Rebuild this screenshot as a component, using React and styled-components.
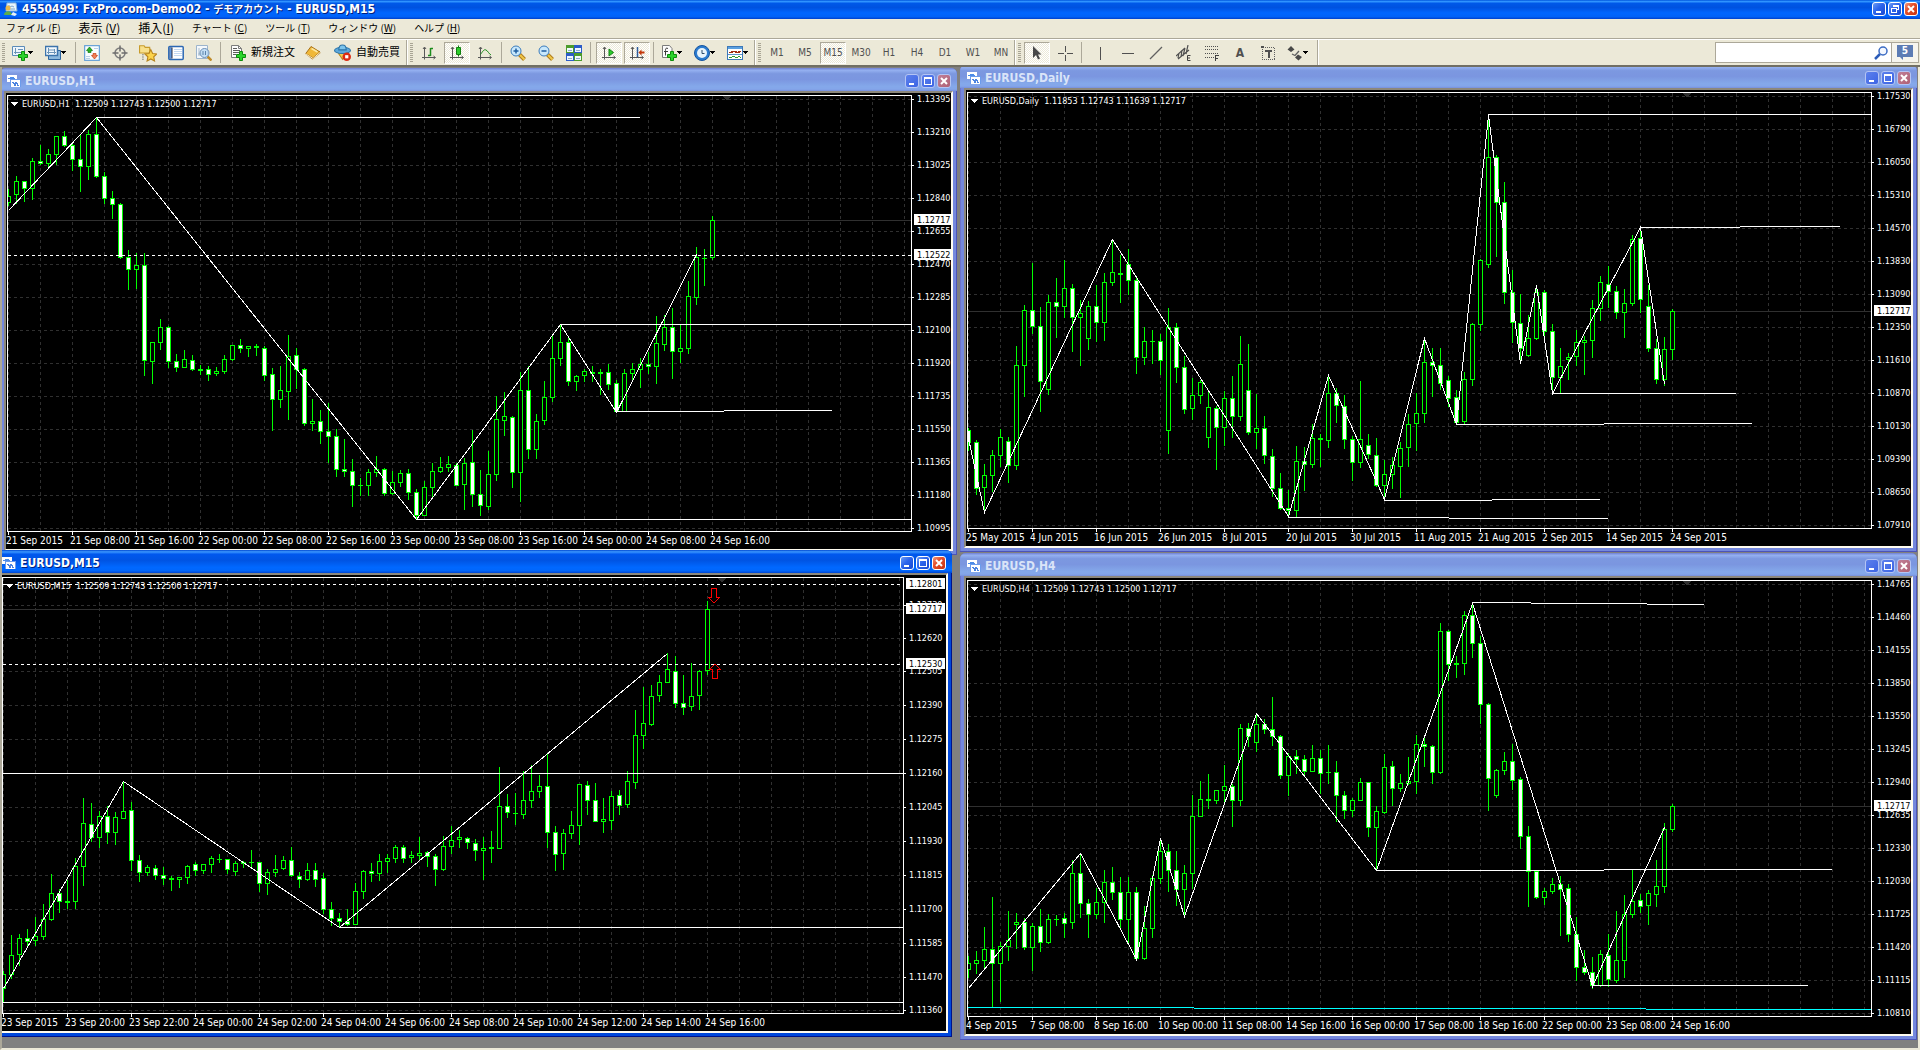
import React from 'react';
import styled, { createGlobalStyle, css } from 'styled-components';

const GlobalStyle = createGlobalStyle`
  * {
    box-sizing: border-box;
  }

  body {
    margin: 0;
    background: #ece9d8;
    font-family: 'DejaVu Sans Condensed', 'Noto Sans', 'Noto Sans CJK JP', sans-serif;
  }

  button {
    margin: 0;
    padding: 0;
    border: 0;
    background: none;
    color: inherit;
    font: inherit;
  }
`;

/* ---------- chart data ---------- */

// One candle per entry: direction (u = hollow, d = filled), high, body top,
// body bottom, low. Heights are in ticks, three ticks to a pixel.
const TICKS = 3;
const STEP = 8;

const H1 = `u 297 319 337 345,u 258 274 314 340,d 274 274 295 335,u 204 214 295 329,d 165 214 220 224,
u 178 193 220 231,u 138 139 193 224,d 124 139 166 170,d 162 166 208 242,d 135 208 229 305,
u 120 133 230 269,d 82 133 259 261,d 247 259 325 341,d 304 325 343 386,d 339 343 502 506,
d 480 502 538 597,u 489 526 538 594,d 489 526 811 857,u 757 757 814 881,u 687 712 757 779,
d 709 712 814 833,d 793 814 832 845,u 780 808 832 833,d 795 811 838 842,d 826 838 841 854,
d 829 838 853 872,u 832 844 850 857,u 796 808 844 851,u 765 766 808 811,d 747 766 775 788,
u 768 769 775 800,d 762 769 772 797,d 768 775 856 872,d 835 853 928 1022,u 829 901 928 953,
u 735 799 904 987,d 774 796 838 896,d 835 838 1000 1007,u 927 994 1000 1022,d 960 994 1024 1059,
d 939 1024 1039 1118,d 1017 1039 1138 1158,d 1047 1138 1143 1158,d 1107 1144 1186 1248,d 1164 1186 1186 1217,
u 1137 1147 1186 1217,u 1098 1138 1147 1158,d 1135 1138 1211 1215,u 1144 1177 1211 1212,u 1140 1150 1177 1189,
d 1137 1150 1207 1229,d 1197 1207 1276 1289,u 1174 1192 1276 1277,u 1119 1144 1192 1224,u 1101 1132 1144 1147,
u 1098 1123 1132 1145,d 1120 1126 1186 1187,u 1105 1120 1184 1259,d 1020 1117 1213 1250,d 1140 1213 1246 1277,
u 1083 1153 1249 1259,u 918 988 1154 1172,u 906 979 991 1037,d 979 982 1147 1193,u 846 901 1147 1235,
d 829 901 1078 1106,u 972 994 1078 1106,u 873 922 991 1004,u 732 805 922 935,u 703 757 805 825,
d 742 757 874 887,u 855 858 874 902,u 838 844 856 875,d 829 847 850 875,d 838 847 850 912,
d 822 847 883 899,d 870 880 965 968,u 837 850 964 965,u 820 838 850 868,u 804 823 838 893,
d 787 823 829 849,u 678 760 829 881,u 675 712 764 782,d 654 712 784 866,u 703 775 784 818,
u 573 619 775 791,u 471 502 622 644,d 477 505 505 585,u 378 391 502 509`;

const DAILY = `d 1014 1021 1058 1082,d 1050 1057 1195 1212,u 1122 1156 1192 1269,u 1080 1096 1157 1205,u 1017 1042 1097 1128,
d 1041 1054 1127 1178,u 768 826 1127 1139,u 645 661 826 920,d 519 661 709 731,d 651 709 874 963,
u 615 637 899 914,d 564 637 649 743,u 510 595 650 681,d 582 595 682 785,u 630 670 682 827,
u 633 649 745 777,d 585 649 697 755,u 549 577 697 752,u 447 547 577 587,d 495 550 553 638,
d 477 523 571 612,d 562 571 802 849,u 711 754 802 822,d 720 754 754 821,d 732 754 811 854,
u 654 712 1021 1091,d 699 712 832 878,d 798 832 958 971,u 865 916 955 987,u 870 877 916 941,
u 900 952 1042 1071,d 949 955 1012 1139,u 903 925 1012 1065,d 858 925 979 1041,u 738 823 979 990,
d 762 901 1027 1034,u 912 1015 1027 1074,d 979 1015 1096 1121,d 1077 1099 1195 1220,d 1149 1195 1255 1258,
d 1200 1255 1261 1280,u 1068 1114 1261 1280,d 1071 1114 1123 1202,u 1002 1045 1123 1133,d 1033 1045 1048 1128,
u 855 910 1052 1071,d 894 910 946 998,d 915 949 1048 1074,d 1039 1048 1117 1172,u 873 1048 1117 1133,
d 1032 1066 1093 1106,d 1044 1096 1186 1190,u 1110 1153 1186 1229,u 1102 1126 1153 1196,u 1056 1075 1129 1221,
u 972 1003 1073 1128,u 909 970 1000 1082,u 744 817 970 996,d 774 817 826 920,d 774 826 880 898,
d 858 871 925 950,d 900 922 997 1003,u 846 868 995 1003,u 699 703 868 885,u 507 511 703 722,
u 75 202 523 533,d 195 202 337 498,d 276 337 607 639,d 540 607 697 758,d 612 700 775 820,
u 675 745 797 800,u 585 607 745 749,d 600 607 724 750,d 702 724 862 910,u 774 829 862 909,
u 789 802 808 867,u 720 757 799 825,u 738 751 757 852,u 630 655 751 801,u 558 577 655 690,
d 528 583 604 651,d 588 604 667 684,u 597 640 667 743,u 435 448 640 647,d 414 445 628 668,
d 585 649 775 785,d 748 775 868 879,u 741 778 868 887,u 657 664 778 809`;

const M15 = `u 1264 1273 1316 1355,u 1156 1216 1273 1284,u 1152 1165 1213 1245,d 1137 1165 1174 1193,u 1101 1159 1171 1187,
u 1062 1108 1160 1167,u 972 1030 1109 1112,d 1018 1030 1054 1088,d 990 1054 1057 1074,u 924 949 1054 1076,
u 744 820 949 1005,d 760 823 862 875,u 784 799 862 891,d 769 799 848 879,u 786 802 848 884,
u 695 784 805 806,d 756 781 931 960,d 915 931 967 995,u 945 952 967 977,d 945 955 976 987,
d 951 976 985 1004,d 978 985 988 1022,u 982 982 988 1013,u 946 949 982 1001,d 936 943 961 975,
u 942 943 961 971,u 919 925 943 968,d 912 928 928 936,d 927 928 958 971,u 933 940 964 977,
d 934 937 940 953,d 900 937 937 948,d 936 937 1000 1025,u 957 967 1000 1034,u 915 958 967 980,
u 919 931 955 959,d 892 931 976 980,d 967 979 988 1013,u 939 961 988 990,d 939 961 988 1010,
d 969 985 1078 1091,d 1056 1078 1105 1127,d 1090 1105 1114 1132,d 1077 1114 1123 1126,u 999 1024 1123 1124,
u 961 964 1024 1044,d 939 964 969 993,u 912 934 970 990,u 913 925 934 968,u 885 892 925 936,
d 885 892 925 938,u 903 916 922 937,u 861 910 916 930,d 903 907 919 948,d 912 919 958 1007,
u 858 889 958 962,u 828 871 889 911,u 840 862 868 893,d 861 865 877 896,d 868 880 901 930,
u 862 895 901 987,d 843 892 895 938,u 651 769 895 896,d 732 769 787 801,d 730 790 790 822,
u 663 751 793 804,u 645 724 751 771,u 676 709 724 741,d 610 709 848 893,d 829 847 913 962,
u 837 850 910 957,u 783 826 850 866,u 702 703 827 882,d 693 706 751 792,d 699 751 814 815,
u 744 808 814 846,u 723 739 811 837,d 720 736 766 792,u 663 694 764 771,u 481 556 698 716,
u 411 520 556 594,u 405 439 523 527,u 375 397 436 453,u 309 358 397 398,d 318 364 460 473,
d 376 460 472 494,u 339 439 469 482,u 361 364 436 479,u 153 178 361 372`;

const H4 = `u 1218 1240 1258 1281,u 1203 1231 1241 1270,u 1131 1198 1232 1258,d 1041 1198 1241 1368,u 1176 1189 1241 1353,
u 1083 1171 1190 1230,u 1089 1117 1123 1196,d 1105 1117 1192 1199,u 1119 1129 1193 1262,d 1077 1129 1178 1205,
u 1092 1108 1178 1179,d 1095 1108 1108 1125,d 1089 1105 1120 1161,u 930 970 1118 1136,d 912 970 1060 1103,
d 1047 1060 1093 1163,u 1014 1057 1094 1106,u 960 997 1057 1116,d 951 997 1027 1047,d 981 1027 1108 1133,
u 981 1027 1108 1178,d 1011 1027 1225 1229,u 1068 1135 1226 1229,u 975 985 1135 1163,u 864 904 986 999,
d 882 904 961 1025,d 903 961 1018 1065,u 945 970 1018 1098,u 735 799 970 1014,u 693 748 799 800,
d 672 748 751 774,u 720 721 751 761,u 645 709 721 755,d 702 709 751 830,u 522 535 751 765,
d 519 535 559 590,u 490 523 578 605,d 507 523 538 551,d 441 538 559 585,d 556 559 677 686,
u 609 619 677 735,d 600 619 628 669,d 616 628 664 674,u 585 625 664 665,d 600 625 670 731,
d 585 667 667 701,d 633 667 736 815,d 724 736 781 806,u 744 751 781 800,u 684 697 751 752,
d 697 697 832 860,u 768 784 832 960,u 612 652 788 789,d 633 649 715 765,u 672 700 715 725,
u 621 694 700 704,u 555 583 695 731,d 564 583 589 648,d 585 589 667 701,u 219 244 667 671,
d 240 244 343 390,d 318 341 344 383,u 183 196 341 372,d 159 196 280 323,d 258 280 463 519,
d 460 463 685 782,u 657 661 737 743,u 606 634 661 674,d 582 634 691 719,d 681 688 859 896,
d 828 859 964 1068,d 963 964 1042 1046,u 1014 1024 1042 1062,u 984 1003 1024 1029,d 979 1003 1018 1155,
d 1002 1015 1153 1175,d 1101 1153 1252 1290,d 1200 1252 1267 1274,d 1221 1267 1306 1316,u 1200 1213 1305 1310,
d 1152 1216 1288 1310,u 1083 1231 1291 1298,u 1035 1093 1231 1283,u 960 1054 1093 1101,d 1032 1051 1069 1086,
u 1020 1030 1066 1122,u 930 1009 1033 1068,u 819 838 1009 1028,u 762 769 838 843`;

const evenRows = Array.from({ length: 14 }, (_, i) => 6 + i * 33);

// levels: [from, to, y, color]; `to` of 0 runs to the edge of the plot.
const CHARTS = [
  {
    title: 'EURUSD,H1',
    quote: '1.12509 1.12743 1.12500 1.12717',
    x: -2,
    y: 1,
    origin: [6, 3],
    right: 905,
    candles: H1,
    rows: evenRows,
    prices: ['1.13395', '1.13210', '1.13025', '1.12840', '1.12655', '1.12470', '1.12285', '1.12100', '1.11920', '1.11735', '1.11550', '1.11365', '1.11180', '1.10995'],
    times: ['21 Sep 2015', '21 Sep 08:00', '21 Sep 16:00', '22 Sep 00:00', '22 Sep 08:00', '22 Sep 16:00', '23 Sep 00:00', '23 Sep 08:00', '23 Sep 16:00', '24 Sep 00:00', '24 Sep 08:00', '24 Sep 16:00'],
    zigzag: [[0, 361], [11, 82], [51, 1288], [69, 704], [76, 968], [86, 494]],
    levels: [[289, 1920, 82], [1681, 0, 703], [1249, 0, 1288], [1849, 2172, 964], [2172, 2496, 961]],
    current: 391,
    dashed: [496],
    tags: [[391, '1.12717'], [496, '1.12522']],
  },
  {
    title: 'EURUSD,Daily',
    quote: '1.11853 1.12743 1.11639 1.12717',
    x: 958,
    y: -2,
    origin: [6, 0],
    right: 905,
    candles: DAILY,
    rows: evenRows,
    prices: ['1.17530', '1.16790', '1.16050', '1.15310', '1.14570', '1.13830', '1.13090', '1.12350', '1.11610', '1.10870', '1.10130', '1.09390', '1.08650', '1.07910'],
    times: ['25 May 2015', '4 Jun 2015', '16 Jun 2015', '26 Jun 2015', '8 Jul 2015', '20 Jul 2015', '30 Jul 2015', '11 Aug 2015', '21 Aug 2015', '2 Sep 2015', '14 Sep 2015', '24 Sep 2015'],
    zigzag: [[0, 1046], [2, 1268], [18, 447], [40, 1280], [45, 855], [52, 1229], [57, 744], [61, 1002], [65, 75], [69, 820], [71, 585], [73, 910], [84, 412], [87, 884]],
    levels: [[1585, 0, 73], [2041, 2340, 412], [2340, 2640, 409], [1777, 2328, 910], [1489, 1932, 1003], [1932, 2376, 1000], [1273, 1596, 1231], [1596, 1920, 1228], [985, 1467, 1282], [1467, 1944, 1285]],
    current: 664,
    dashed: [],
    tags: [[664, '1.12717']],
  },
  {
    title: 'EURUSD,H4',
    quote: '1.12509 1.12743 1.12500 1.12717',
    x: 958,
    y: 486,
    origin: [6, 28],
    right: 905,
    candles: H4,
    rows: evenRows,
    prices: ['1.14765', '1.14460', '1.14155', '1.13850', '1.13550', '1.13245', '1.12940', '1.12635', '1.12330', '1.12030', '1.11725', '1.11420', '1.11115', '1.10810'],
    times: ['4 Sep 2015', '7 Sep 08:00', '8 Sep 16:00', '10 Sep 00:00', '11 Sep 08:00', '14 Sep 16:00', '16 Sep 00:00', '17 Sep 08:00', '18 Sep 16:00', '22 Sep 00:00', '23 Sep 08:00', '24 Sep 16:00'],
    zigzag: [[0, 1315], [14, 911], [21, 1228], [24, 864], [27, 1098], [36, 489], [51, 960], [63, 159], [78, 1309], [87, 833]],
    levels: [[1537, 1713, 157], [1713, 2061, 160], [2061, 2232, 163], [1249, 1932, 961], [1932, 2616, 958], [1897, 2544, 1306], [24, 702, 1372, '#00ffff'], [702, 2058, 1375, '#00ffff'], [2058, 0, 1378, '#00ffff']],
    current: 769,
    dashed: [],
    tags: [[769, '1.12717']],
  },
  {
    title: 'EURUSD,M15',
    quote: '1.12509 1.12743 1.12500 1.12717',
    active: true,
    x: -7,
    y: 483,
    origin: [1, 25],
    right: 902,
    candles: M15,
    rows: [30, 63, 96, 130, 164, 198, 232, 266, 300, 334, 368, 402, 435],
    prices: ['1.12730', '1.12620', '1.12505', '1.12390', '1.12275', '1.12160', '1.12045', '1.11930', '1.11815', '1.11700', '1.11585', '1.11470', '1.11360'],
    times: ['23 Sep 2015', '23 Sep 20:00', '23 Sep 22:00', '24 Sep 00:00', '24 Sep 02:00', '24 Sep 04:00', '24 Sep 06:00', '24 Sep 08:00', '24 Sep 10:00', '24 Sep 12:00', '24 Sep 14:00', '24 Sep 16:00'],
    zigzag: [[0, 1316], [15, 695], [42, 1132], [83, 311]],
    levels: [[6, 0, 670], [6, 0, 1357], [1018, 0, 1132]],
    current: 178,
    dashed: [103, 343],
    tags: [[103, '1.12801'], [178, '1.12717'], [343, '1.12530']],
    arrows: true,
  },
];

/* ---------- chart ---------- */

const ChartSvg = styled.svg`
  display: block;
  background: #000;
  shape-rendering: crispEdges;
`;

const ChartText = styled.text`
  fill: ${(props) => (props.$dark ? '#000' : '#fff')};
  font-size: 9px;
  white-space: pre;
`;

const TimeText = styled(ChartText)`
  font-size: 10px;
`;

const CHART_W = 945;
const CHART_H = 456;
const TOP = 2;
const BOTTOM = 438;

const Candle = ({ x, up, high, top, bottom, low }) => {
  const height = bottom - top + 1;
  return (
    <g>
      <rect x={x} y={high} width="1" height={low - high + 1} fill="#00ff00" />
      <rect x={x - 2} y={top} width="5" height={height} fill="#00ff00" />
      {height > 2 && (
        <rect x={x - 1} y={top + 1} width="3" height={height - 2} fill={up ? '#000' : '#fff'} />
      )}
    </g>
  );
};

const Chart = ({ chart }) => {
  const { origin, right } = chart;
  const px = (v) => Math.floor(v / TICKS) - origin[0];
  const py = (v) => Math.floor(v / TICKS) - origin[1];

  const columns = [];
  for (let x = 2; x < right; x += 32) columns.push(x);

  const candles = chart.candles.split(',').map((row, i) => {
    const [dir, high, top, bottom, low] = row.trim().split(' ');
    return { x: 2 + i * STEP, up: dir === 'u', high: py(high), top: py(top), bottom: py(bottom), low: py(low) };
  });

  return (
    <ChartSvg width={CHART_W} height={CHART_H} viewBox={`0 0 ${CHART_W} ${CHART_H}`} role="img" aria-label={chart.title}>
      <g stroke="#303030" strokeDasharray="3 3">
        {columns.map((x) => (
          <path key={x} d={`M${x + 0.5} ${TOP + 1}V${BOTTOM}`} />
        ))}
        {chart.rows.map((y) => (
          <path key={y} d={`M2 ${y + 0.5}H${right}`} />
        ))}
      </g>
      <rect x="2" y={py(chart.current)} width={right - 2} height="1" fill="#303030" />
      <path d="M716 3h9l-4 4h-1z" fill="#303030" />

      {candles.map((c) => (
        <Candle key={c.x} {...c} />
      ))}

      {chart.levels.map(([from, to, y, color]) => (
        <rect
          key={`${from}-${y}`}
          x={px(from)}
          y={py(y)}
          width={(to ? px(to) : right) - px(from)}
          height="1"
          fill={color || '#fff'}
        />
      ))}
      {chart.dashed.map((y) => (
        <path key={y} d={`M2 ${py(y) + 0.5}H${right}`} stroke="#fff" strokeDasharray="3 3" />
      ))}
      <polyline
        points={chart.zigzag.map(([i, y]) => `${2.5 + i * STEP},${py(y) + 0.5}`).join(' ')}
        fill="none"
        stroke="#fff"
      />
      {chart.arrows && (
        <g fill="none" stroke="#ff0000">
          <path d="M710.5 13.5h5v9h3l-5.500 5.500l-5.500-5.500h3z" />
          <path d="M711.500 103.500h5v-9h3l-5.500-5.500l-5.500 5.500h3z" />
        </g>
      )}

      <rect x="0" y="0" width="1" height={CHART_H} fill="#000" />
      <path d={`M1.500 ${TOP + 0.5}H${right + 0.5}V${BOTTOM + 0.5}H1.500Z`} fill="none" stroke="#fff" />

      <path d="M5 9h7l-3 4h-1z" fill="#fff" />
      <ChartText x="16" y="14">{`${chart.title}  ${chart.quote}`}</ChartText>

      {chart.times.map((time, i) => (
        <g key={time}>
          <rect x={2 + i * 64} y={BOTTOM} width="1" height="4" fill="#fff" />
          <TimeText x={i * 64} y="451">{time}</TimeText>
        </g>
      ))}
      {chart.rows.map((y, i) => (
        <g key={y}>
          <rect x={right} y={y} width="3" height="1" fill="#fff" />
          <ChartText x={right + 6} y={y + 3}>{chart.prices[i]}</ChartText>
        </g>
      ))}
      {chart.tags.map(([y, label]) => (
        <g key={label}>
          <rect x={right + 3} y={py(y) - 6} width="39" height="11" fill="#fff" />
          <ChartText $dark x={right + 6} y={py(y) + 3}>{label}</ChartText>
        </g>
      ))}
    </ChartSvg>
  );
};

/* ---------- windows ---------- */

const CaptionButton = styled.button`
  display: flex;
  align-items: center;
  justify-content: center;
  width: 14px;
  height: 14px;
  border: 1px solid ${(props) => (props.$active ? '#fff' : '#b4c4f4')};
  border-radius: 3px;
  background: ${(props) => {
    if (props.$close) {
      return props.$active
        ? 'linear-gradient(135deg, #f0967c, #e4502c 40%, #c83010)'
        : 'linear-gradient(135deg, #c08098, #b06074)';
    }
    return props.$active
      ? 'linear-gradient(135deg, #6c9cf4, #2c64ec 45%, #1848d0)'
      : 'linear-gradient(135deg, #5c80ec, #3c64e4)';
  }};
`;

const Caption = styled.div`
  display: flex;
  gap: 2px;
`;

const CaptionButtons = ({ active, restore }) => (
  <Caption>
    <CaptionButton $active={active} aria-label="最小化">
      <svg width="12" height="12"><path d="M3 8h5v2H3z" fill="#fff" /></svg>
    </CaptionButton>
    <CaptionButton $active={active} aria-label={restore ? '元に戻す' : '最大化'}>
      <svg width="12" height="12" fill="none" stroke="#fff" shapeRendering="crispEdges">
        {restore ? (
          <path d="M4.500 4V2.500h5v4H8M4 3h6M2.500 5.500h5v4h-5zM2 5h6" />
        ) : (
          <path d="M2.500 3.500h7v6h-7zM2 2.500h8" />
        )}
      </svg>
    </CaptionButton>
    <CaptionButton $active={active} $close aria-label="閉じる">
      <svg width="12" height="12"><path d="M3 3l6 6M9 3l-6 6" stroke="#fff" strokeWidth="2" /></svg>
    </CaptionButton>
  </Caption>
);

const activeFrame = css`
  background: #0048dc;
  box-shadow: inset -1px -1px #00138c;
`;

const inactiveFrame = css`
  background: #7488dd;
  box-shadow: inset -1px -1px #4c54b8, inset 1px 0 #6c74cc;
`;

const Window = styled.section`
  position: absolute;
  left: ${(props) => props.$x}px;
  top: ${(props) => props.$y}px;
  padding: 0 4px 4px;
  border-radius: 6px 6px 0 0;
  ${(props) => (props.$active ? activeFrame : inactiveFrame)}
`;

const WindowTitle = styled.header`
  display: flex;
  align-items: center;
  gap: 4px;
  height: 23px;
  margin: 0 -4px;
  padding: 2px 6px 0 7px;
  border-radius: 6px 6px 0 0;
  background: ${(props) =>
    props.$active
      ? 'linear-gradient(#0048d0, #3c98ff 8%, #0058ee 18%, #0054e3 45%, #0068ff 75%, #0066fc 90%, #0044d0)'
      : 'linear-gradient(#7080d4, #94b0f0 10%, #7c98e0 25%, #7b96e0 50%, #84a8ea 80%, #84a6ea 92%, #7890dc)'};
`;

const WindowName = styled.h2`
  flex: 1;
  margin: 0;
  color: ${(props) => (props.$active ? '#fff' : '#dae4f8')};
  font-size: 12px;
  font-weight: bold;
  line-height: 16px;
  text-shadow: ${(props) => (props.$active ? '1px 1px #00207c' : 'none')};
`;

const Client = styled.div`
  border: 2px solid;
  border-color: #8c887c #fffcf0 #fffcf0 #8c887c;
`;

const ChartWindowIcon = () => (
  <svg width="14" height="14" viewBox="0 0 14 14" shapeRendering="crispEdges">
    <path d="M0 1h10v7H0z" fill="#fff" />
    <path d="M1 4.500h2v-1h1v1h1v-1h1v1h2" fill="none" stroke="#4c8ce8" />
    <path d="M3 5h11v8H3z" fill="#6c9cec" />
    <path d="M4 6h9v7H4z" fill="#fff" />
    <path d="M5 8.500h1v1h1v2h1v-3h1v1h1v2h1v-1" fill="none" stroke="#4c84e0" />
  </svg>
);

const ChartWindow = ({ chart }) => (
  <Window $x={chart.x} $y={chart.y} $active={chart.active}>
    <WindowTitle $active={chart.active}>
      <ChartWindowIcon />
      <WindowName $active={chart.active}>{chart.title}</WindowName>
      <CaptionButtons active={chart.active} />
    </WindowTitle>
    <Client>
      <Chart chart={chart} />
    </Client>
  </Window>
);

/* ---------- toolbar icons ---------- */

const Icon = ({ children, size = 16, crisp }) => (
  <svg width={size} height={size} viewBox="0 0 16 16" fill="none" shapeRendering={crisp ? 'crispEdges' : 'auto'}>
    {children}
  </svg>
);

const GreenPlus = () => (
  <path d="M9.500 6.500h3v3h3v3h-3v3h-3v-3h-3v-3h3z" fill="#2cd42c" stroke="#0c8c0c" />
);

const Lens = ({ x = 6, y = 6, children }) => (
  <>
    <path d={`M${x + 3.5} ${y + 3.5}l5 5`} stroke="#b07c1c" strokeWidth="4" />
    <path d={`M${x + 4} ${y + 4}l4.500 4.500`} stroke="#f0c848" strokeWidth="2" />
    <circle cx={x} cy={y} r="5" fill="#c8e8fc" stroke="#3c7cbc" />
    {children}
  </>
);

const Axes = () => (
  <path d="M3.500 2.500v12M1 12.500h13M2 4l1.500-2L5 4M12.500 11l2 1.500l-2 1.500" stroke="#585858" />
);

const icons = {
  newChart: (
    <Icon>
      <path d="M.5 1.500h12v9H.5z" fill="#eef6fc" stroke="#5c8cb8" />
      <path d="M3.500 3v6M2 7.500h9M6 4.500h5" stroke="#6c94b8" />
      <GreenPlus />
    </Icon>
  ),
  profiles: (
    <Icon>
      <path d="M3.500 5.500h12v9h-12z" fill="#8cb8dc" stroke="#2c64a0" />
      <path d="M.5 1.500h12v9H.5z" fill="#f4fafe" stroke="#3c74ac" strokeWidth="1.500" />
      <path d="M3.500 3v6M2 7.500h9M9.500 4v5M4 5h5" stroke="#6c94b8" />
    </Icon>
  ),
  market: (
    <Icon>
      <rect x=".5" y=".5" width="15" height="15" rx="1" fill="#f8fcff" stroke="#6ca4d8" strokeWidth="1.500" />
      <path d="M10 3.500h4M2 11.500h4M2 13.500h4" stroke="#b8d0e4" />
      <path d="M5.500 2l3 3.500H7v2H4v-2H2.500z" fill="#2cac2c" stroke="#0c7c0c" strokeWidth=".7" />
      <path d="M10.500 14l3-3.500H12v-2H9v2H7.500z" fill="#f08058" stroke="#c83c10" strokeWidth=".7" />
    </Icon>
  ),
  crosshair: (
    <Icon>
      <circle cx="8" cy="8" r="5" stroke="#7c7c7c" strokeWidth="1.500" />
      <path d="M8 .5v6M8 9.500v6M.5 8h6M9.500 8h6" stroke="#6c6c6c" strokeWidth="1.500" />
    </Icon>
  ),
  navigator: (
    <Icon size={18}>
      <path d="M.5 1.500h4l1 1.500h4v5h-9z" fill="#f8e08c" stroke="#c89c2c" />
      <path d="M3.500 9v6" stroke="#505050" strokeDasharray="1 1" />
      <path d="M10.500 5l1.600 3.400 3.700.5-2.700 2.500.7 3.700-3.300-1.800-3.300 1.800.7-3.700L5.200 8.900l3.700-.5z" fill="#fcd44c" stroke="#b8841c" />
    </Icon>
  ),
  terminal: (
    <Icon>
      <rect x=".8" y="1.500" width="14.400" height="13" rx="1" fill="#fff" stroke="#2c68b4" strokeWidth="1.500" />
      <path d="M1.500 2.500h3v11h-3z" fill="#2c2c3c" />
      <path d="M1.500 2.500h2v11h-2z" fill="#5c94dc" />
      <path d="M6 4.500h8M6 6.500h8M6 8.500h8M6 10.500h8" stroke="#c4d8f0" />
    </Icon>
  ),
  tester: (
    <Icon>
      <path d="M.5.500h11v13H.5z" fill="#f4f8fc" stroke="#9cb4cc" />
      <path d="M3 3v8M2 9h8" stroke="#a8bccc" />
      <path d="M11.500 11.500l4 4" stroke="#c08c2c" strokeWidth="2.500" />
      <circle cx="8.500" cy="8" r="4.500" fill="#b8d8f4" fillOpacity=".8" stroke="#6c90b8" />
      <path d="M7 6v4M9.500 6v4" stroke="#5c84ac" />
    </Icon>
  ),
  newOrder: (
    <Icon>
      <path d="M1.500.500h7l3 3v9h-10z" fill="#fcfcfc" stroke="#7c7c7c" />
      <path d="M8.500.500v3h3" stroke="#7c7c7c" />
      <path d="M3 5.500h7M3 7.500h6M3 9.500h3M3 3.500h4" stroke="#5c5c5c" />
      <GreenPlus />
    </Icon>
  ),
  book: (
    <Icon>
      <path d="M.5 9l7 5.500L15.500 8l-1-2z" fill="#a86c10" />
      <path d="M.8 8.500L6 1.500l9 5.500-7 6z" fill="#f0b838" stroke="#a87014" />
      <path d="M6.500 3.500l6 3.500" stroke="#fce8a0" strokeWidth="1.500" />
      <path d="M1 9l7 4.500 7-6" stroke="#fcecc0" strokeWidth="1" />
    </Icon>
  ),
  autoTrade: (
    <Icon size={17}>
      <path d="M3 7l5 7.500L14 7z" fill="#f4cc50" stroke="#b88820" />
      <ellipse cx="8" cy="6" rx="7.500" ry="3" fill="#5ca8dc" stroke="#2c74a8" />
      <path d="M4.500 5.500c0-6 7-6 7 0z" fill="#7cc4ec" stroke="#2c74a8" />
      <circle cx="12" cy="12" r="4" fill="#dc2c14" />
      <path d="M10.500 10.500h3v3h-3z" fill="#fff" />
    </Icon>
  ),
  bars: (
    <Icon>
      <Axes />
      <path d="M9.500 3v8M9.500 3.500h2.500M7 10.500h2.500" stroke="#1c8c1c" strokeWidth="1.500" />
    </Icon>
  ),
  candles: (
    <Icon>
      <Axes />
      <path d="M9.500.500v11" stroke="#108010" />
      <path d="M7.500 2.500h4v7h-4z" fill="#2ccc2c" stroke="#108010" />
    </Icon>
  ),
  line: (
    <Icon>
      <Axes />
      <path d="M3.500 9.500C6 6 7 4 9 5s3 4 5 5" stroke="#1c8c1c" />
    </Icon>
  ),
  zoomIn: (
    <Icon>
      <Lens><path d="M6 3.500v5M3.500 6h5" stroke="#1c5ca0" strokeWidth="1.500" /></Lens>
    </Icon>
  ),
  zoomOut: (
    <Icon>
      <Lens><path d="M3.500 6h5" stroke="#1c5ca0" strokeWidth="1.500" /></Lens>
    </Icon>
  ),
  tile: (
    <Icon crisp>
      <path d="M0 0h8v8H0zM8 8h8v8H8z" fill="#4c9c2c" />
      <path d="M8 0h8v8H8zM0 8h8v8H0z" fill="#2c5cc8" />
      <path d="M1 3h6v4H1zM9 3h6v4H9zM1 11h6v4H1zM9 11h6v4H9z" fill="#f0f8ff" />
      <path d="M2 5.500h4M10 5.500h4M2 13.500h4M10 13.500h4" stroke="#8cacc8" />
    </Icon>
  ),
  autoScroll: (
    <Icon>
      <Axes />
      <path d="M8 4l4.500 3.500L8 11z" fill="#2ccc2c" stroke="#108010" />
    </Icon>
  ),
  shift: (
    <Icon>
      <Axes />
      <path d="M8.500 2v10" stroke="#2c5c9c" strokeWidth="1.500" />
      <path d="M9.500 7.500l3-3v2h3v2h-3v2z" fill="#c4380c" />
    </Icon>
  ),
  indicators: (
    <Icon>
      <path d="M1.500.500h7l2.500 3v9H1.500z" fill="#fcfcfc" stroke="#7c7c7c" />
      <path d="M7 3.500c-2-1-2.500 0-2.500 2v5M3 6.500h4" stroke="#3c3c3c" />
      <GreenPlus />
    </Icon>
  ),
  periods: (
    <Icon>
      <circle cx="8" cy="8" r="7.500" fill="#2c7cd0" stroke="#1454a0" />
      <circle cx="8" cy="8" r="5" fill="#e8f4fc" />
      <path d="M8 5v3.500h2.500" stroke="#2c4c6c" />
    </Icon>
  ),
  templates: (
    <Icon crisp>
      <path d="M.5 1.500h15v13H.5z" fill="#fff" stroke="#3c78b8" />
      <path d="M1 2h14v2H1z" fill="#5ca0e0" />
      <path d="M2 7.500h2l2-1h2l2 1h1l2-1h1" stroke="#a02c14" strokeWidth="1.500" />
      <path d="M1 9.500h14" stroke="#5c94cc" />
      <path d="M2 12.500h2l2-1h1l2 1h1l2-1 2 1" stroke="#2c9c2c" />
    </Icon>
  ),
  cursor: (
    <Icon>
      <path d="M4 1v12l3-3 2 4.500 2-1-2-4h3.500z" fill="#484848" />
    </Icon>
  ),
  cross: (
    <Icon crisp>
      <path d="M8.500 1v6M8.500 10v6M1 8.500h6M10 8.500h6" stroke="#505050" />
    </Icon>
  ),
  vline: <Icon crisp><path d="M8.500 2v13" stroke="#505050" /></Icon>,
  hline: <Icon crisp><path d="M2 8.500h12" stroke="#505050" /></Icon>,
  trend: <Icon><path d="M2 14L14 2" stroke="#606060" strokeWidth="1.300" /></Icon>,
  channel: (
    <Icon>
      <path d="M0 11L9 3M2 14l11-9M3 8l-1 5M6 5l-1 7M9 3L7 11M12 0l-2 9" stroke="#505050" strokeWidth="1.200" />
      <path d="M14.500 10.500h-3v5h3M11.500 13h2.500" stroke="#404040" />
    </Icon>
  ),
  fibo: (
    <Icon crisp>
      <path d="M1 1.500h14M1 4.500h14M1 8.500h14M1 12.500h9" stroke="#505050" strokeDasharray="1 1" />
      <path d="M11.500 16v-5.500H15M11 13.500h3" stroke="#404040" />
    </Icon>
  ),
  label: (
    <Icon crisp>
      <path d="M2.500 2.500h12v12h-12z" stroke="#606060" strokeDasharray="1 1" />
      <path d="M1 1h3v2H1z" fill="#505050" />
      <path d="M5 6h7M8.500 5v8" stroke="#505050" strokeWidth="2" />
    </Icon>
  ),
  shapes: (
    <Icon>
      <path d="M.5 4.500L4 1l3.500 3.500L4 7zM8 12.500L11 9.500l4 2.500-3.500 3.500z" fill="#484848" />
      <path d="M5 9l3 1.500 4-4.500" stroke="#606060" strokeWidth="1.300" />
    </Icon>
  ),
};

/* ---------- application frame ---------- */

const App = styled.div`
  display: flex;
  flex-direction: column;
  min-height: 100vh;
  overflow: hidden;
  background: #ece9d8;
`;

const TitleBar = styled.header`
  display: flex;
  align-items: center;
  gap: 4px;
  height: 19px;
  padding: 0 2px 1px 4px;
  background: linear-gradient(#0054dc, #3094ff 8%, #0058e8 18%, #0052e0 40%, #0066ff 68%, #0062f8 88%, #0040cc);
`;

const AppName = styled.h1`
  flex: 1;
  margin: 0;
  color: #fff;
  font-size: 12px;
  font-weight: bold;
  line-height: 16px;
  text-shadow: 1px 1px #00207c;

  span {
    font-size: 10px;
  }
`;

const MenuBar = styled.nav`
  display: flex;
  align-items: center;
  gap: 18px;
  height: 20px;
  padding: 0 6px 2px;
  border-bottom: 1px solid #aca899;
`;

const MenuItem = styled.button`
  font-family: 'Noto Sans CJK JP', sans-serif;
  font-size: ${(props) => (props.$kanji ? 12 : 10)}px;
  line-height: 16px;
  white-space: nowrap;
`;

const ToolBar = styled.div`
  display: flex;
  align-items: center;
  height: 28px;
  border-top: 1px solid #fff;
  border-bottom: 2px solid #716f64;
`;

const Group = styled.div`
  display: flex;
  align-items: center;
  gap: 2px;
  height: 25px;
  padding: 0 ${(props) => (props.$tight ? 0 : 3)}px 0 2px;
  border-right: 1px solid #aca899;
  box-shadow: 1px 0 #fff;
  margin-right: 1px;
`;

const Grip = styled.span`
  width: 3px;
  height: 19px;
  margin-right: 1px;
  background: repeating-linear-gradient(#a8a494 0 1px, transparent 1px 2px);
`;

const Separator = styled.span`
  width: ${(props) => (props.$wide ? 5 : 3)}px;
  height: 21px;
  background: linear-gradient(#aca899, #aca899) 1px 0 / 1px 100% no-repeat;
`;

const pressed = css`
  border: 1px solid;
  border-color: #aca899 #fff #fff #aca899;
  background: repeating-conic-gradient(#fff 0 25%, #ece9d8 0 50%) 0 0 / 2px 2px;
`;

const Tool = styled.button`
  display: flex;
  align-items: center;
  justify-content: center;
  width: 26px;
  height: 22px;
  color: #505050;
  font-size: ${(props) => (props.$letter ? 12 : 10)}px;
  font-weight: ${(props) => (props.$letter ? 'bold' : 'normal')};
  ${(props) => props.$pressed && pressed}
`;

const MenuTool = styled(Tool)`
  justify-content: flex-start;
  width: 31px;
  padding-left: 4px;
`;

const TextTool = styled(Tool)`
  width: auto;
  gap: 5px;
  padding: 0 3px 0 6px;
  color: #000;
  font-family: 'Noto Sans CJK JP', sans-serif;
  font-size: 11px;
  line-height: 16px;
  white-space: nowrap;

  span {
    padding-bottom: 4px;
  }
`;

const DropArrow = () => (
  <svg width="5" height="3" shapeRendering="crispEdges">
    <path d="M0 0h5L3 3H2z" fill="#000" />
  </svg>
);

const Search = styled.div`
  display: flex;
  margin: 0 1px 0 auto;
  height: 21px;
  border: 1px solid #aca899;
`;

const SearchInput = styled.input`
  width: 150px;
  border: 0;
  padding: 0 4px;
  outline: 0;
  background: #fff;
  font-size: 11px;
`;

const SearchButton = styled.button`
  display: flex;
  align-items: center;
  justify-content: center;
  width: 25px;
  background: #fff;
  padding-left: 5px;
`;

const Messages = styled.button`
  display: flex;
  align-items: center;
  justify-content: center;
  width: 27px;
  border-left: 1px solid #aca899;
  background: #f6f5ee;
`;

const Bubble = styled.span`
  width: 16px;
  height: 15px;
  background: #5c7cb4;
  clip-path: polygon(0 0, 100% 0, 100% 12px, 6px 12px, 6px 100%, 3px 12px, 0 12px);
  color: #fff;
  font-size: 10px;
  font-weight: bold;
  line-height: 12px;
`;

const Workspace = styled.main`
  position: relative;
  flex: 1;
  min-height: 981px;
  overflow: hidden;
  border: solid #ece9d8;
  border-width: 0 2px 2px;
  border-left-color: #aca899;
  background: #808080;
`;

const menus = [
  ['ファイル ', 'F'],
  ['表示 ', 'V', true],
  ['挿入', 'I', true],
  ['チャート ', 'C'],
  ['ツール ', 'T'],
  ['ウィンドウ ', 'W'],
  ['ヘルプ ', 'H'],
];

const timeframes = ['M1', 'M5', 'M15', 'M30', 'H1', 'H4', 'D1', 'W1', 'MN'];

const IconTool = ({ icon, label, isPressed }) => (
  <Tool aria-label={label} $pressed={isPressed}>
    {icons[icon]}
  </Tool>
);

const IconMenuTool = ({ icon, label }) => (
  <MenuTool aria-label={label}>
    {icons[icon]}
    <DropArrow />
  </MenuTool>
);

const Terminal = () => {
  return (
    <>
      <GlobalStyle />
      <App>
        <TitleBar>
          <svg width="14" height="14" viewBox="0 0 14 14">
            <path d="M3 1h9l1 8H2z" fill="#e8f4fc" stroke="#8cb4d8" />
            <path d="M5 3v4h6M6 5l2-1 2 1" fill="none" stroke="#7ca4cc" />
            <circle cx="4" cy="6" r="2.500" fill="#e8b84c" />
            <path d="M0 13c0-5 8-5 8 0z" fill="#5cac4c" />
            <path d="M9 10l4 2-2 2-4-1z" fill="#e8f0f8" />
          </svg>
          <AppName>
            4550499: FxPro.com-Demo02 - <span>デモアカウント</span> - EURUSD,M15
          </AppName>
          <CaptionButtons active restore />
        </TitleBar>

        <MenuBar>
          {menus.map(([label, key, kanji]) => (
            <MenuItem key={label} $kanji={kanji}>
              {label}(<u>{key}</u>)
            </MenuItem>
          ))}
        </MenuBar>

        <ToolBar>
          <Group>
            <Grip />
            <IconMenuTool icon="newChart" label="新規チャート" />
            <IconMenuTool icon="profiles" label="チャートの組表示" />
            <Separator />
            <IconTool icon="market" label="気配値表示" />
            <IconTool icon="crosshair" label="データウィンドウ" />
            <IconTool icon="navigator" label="ナビゲーター" />
            <IconTool icon="terminal" label="ターミナル" />
            <IconTool icon="tester" label="ストラテジーテスター" />
            <Separator />
            <TextTool>{icons.newOrder}<span>新規注文</span></TextTool>
            <IconTool icon="book" label="メタエディター" />
            <TextTool>{icons.autoTrade}<span>自動売買</span></TextTool>
          </Group>

          <Group $tight>
            <Grip />
            <IconTool icon="bars" label="バーチャート" />
            <IconTool icon="candles" label="ローソク足" isPressed />
            <IconTool icon="line" label="ラインチャート" />
            <Separator />
            <IconTool icon="zoomIn" label="拡大" />
            <IconTool icon="zoomOut" label="縮小" />
            <IconTool icon="tile" label="整列" />
            <Separator $wide />
            <IconTool icon="autoScroll" label="自動スクロール" isPressed />
            <IconTool icon="shift" label="チャートシフト" isPressed />
            <Separator />
            <IconMenuTool icon="indicators" label="インディケーター" />
            <IconMenuTool icon="periods" label="時間足設定" />
            <IconMenuTool icon="templates" label="テンプレート" />
          </Group>

          <Group $tight>
            <Grip />
            {timeframes.map((frame) => (
              <Tool key={frame} $pressed={frame === 'M15'}>
                {frame}
              </Tool>
            ))}
          </Group>

          <Group>
            <Grip />
            <IconTool icon="cursor" label="カーソル" isPressed />
            <IconTool icon="cross" label="クロスヘア" />
            <Separator $wide />
            <IconTool icon="vline" label="垂直線" />
            <IconTool icon="hline" label="水平線" />
            <IconTool icon="trend" label="トレンドライン" />
            <IconTool icon="channel" label="チャネル" />
            <IconTool icon="fibo" label="フィボナッチ" />
            <Tool $letter>A</Tool>
            <IconTool icon="label" label="ラベル" />
            <IconMenuTool icon="shapes" label="矢印" />
          </Group>

          <Search>
            <SearchInput aria-label="検索" />
            <SearchButton aria-label="検索する">
              <svg width="14" height="14" viewBox="0 0 14 14">
                <path d="M1 13l5-5" stroke="#2c5cb8" strokeWidth="2.500" />
                <circle cx="9" cy="5" r="4" fill="#f4f8ff" stroke="#3c6cc4" strokeWidth="1.500" />
              </svg>
            </SearchButton>
            <Messages aria-label="メッセージ">
              <Bubble>5</Bubble>
            </Messages>
          </Search>
        </ToolBar>

        <Workspace>
          {CHARTS.map((chart) => (
            <ChartWindow key={chart.title} chart={chart} />
          ))}
        </Workspace>
      </App>
    </>
  );
};

export default Terminal;
